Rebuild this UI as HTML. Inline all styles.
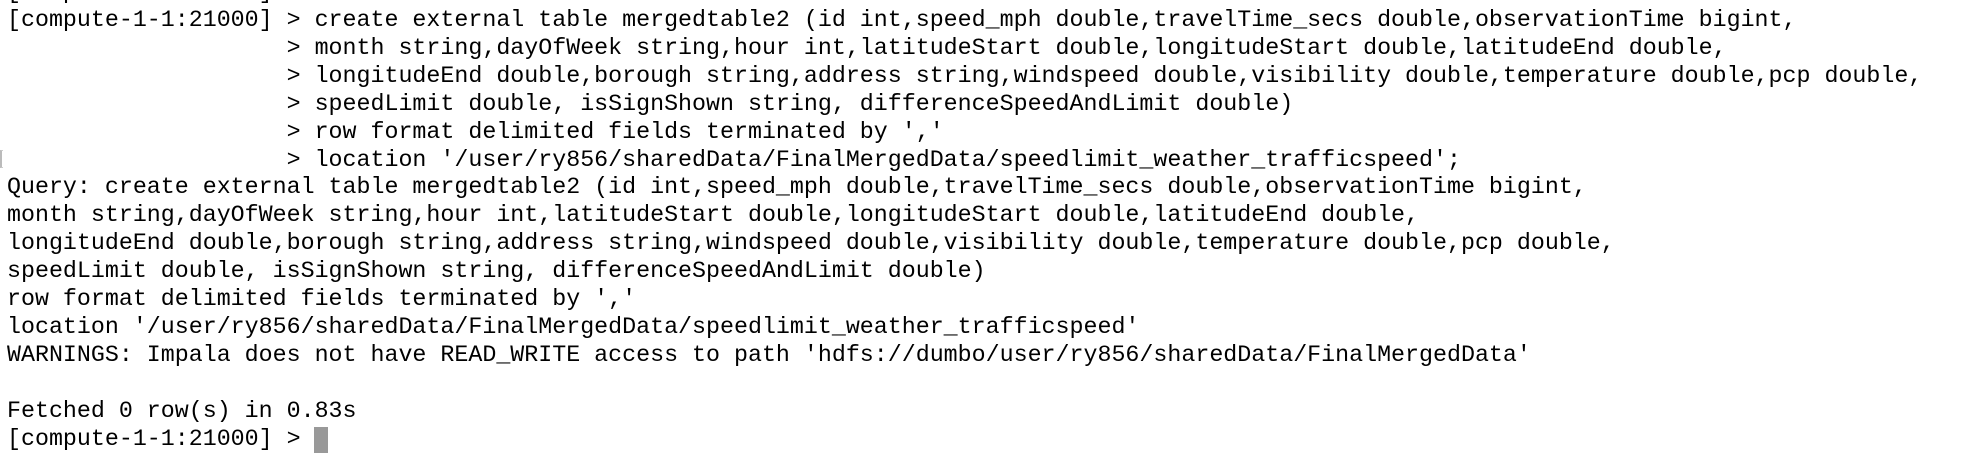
<!DOCTYPE html>
<html><head><meta charset="utf-8"><style>
html,body{margin:0;padding:0;background:#fff;width:1988px;height:468px;overflow:hidden;position:relative}
pre{position:absolute;left:7px;top:-20.9px;margin:0;font-family:"Liberation Mono",monospace;font-size:23.3px;line-height:27.9px;color:#000;white-space:pre}
.br{position:absolute;left:0;top:150px;height:18px;border-left:2px solid #bbb;border-top:1px solid #ccc;border-bottom:1px solid #ccc;width:3px;box-sizing:border-box}
.cur{position:absolute;left:314px;top:427px;width:14px;height:26px;background:#999}
</style></head><body>
<pre>[compute-1-1:21000] &gt; 
[compute-1-1:21000] &gt; create external table mergedtable2 (id int,speed_mph double,travelTime_secs double,observationTime bigint,
                    &gt; month string,dayOfWeek string,hour int,latitudeStart double,longitudeStart double,latitudeEnd double,
                    &gt; longitudeEnd double,borough string,address string,windspeed double,visibility double,temperature double,pcp double,
                    &gt; speedLimit double, isSignShown string, differenceSpeedAndLimit double)
                    &gt; row format delimited fields terminated by ','
                    &gt; location '/user/ry856/sharedData/FinalMergedData/speedlimit_weather_trafficspeed';
Query: create external table mergedtable2 (id int,speed_mph double,travelTime_secs double,observationTime bigint,
month string,dayOfWeek string,hour int,latitudeStart double,longitudeStart double,latitudeEnd double,
longitudeEnd double,borough string,address string,windspeed double,visibility double,temperature double,pcp double,
speedLimit double, isSignShown string, differenceSpeedAndLimit double)
row format delimited fields terminated by ','
location '/user/ry856/sharedData/FinalMergedData/speedlimit_weather_trafficspeed'
WARNINGS: Impala does not have READ_WRITE access to path 'hdfs://dumbo/user/ry856/sharedData/FinalMergedData'

Fetched 0 row(s) in 0.83s
[compute-1-1:21000] &gt; </pre>
<div class="br"></div>
<div class="cur"></div>
</body></html>
